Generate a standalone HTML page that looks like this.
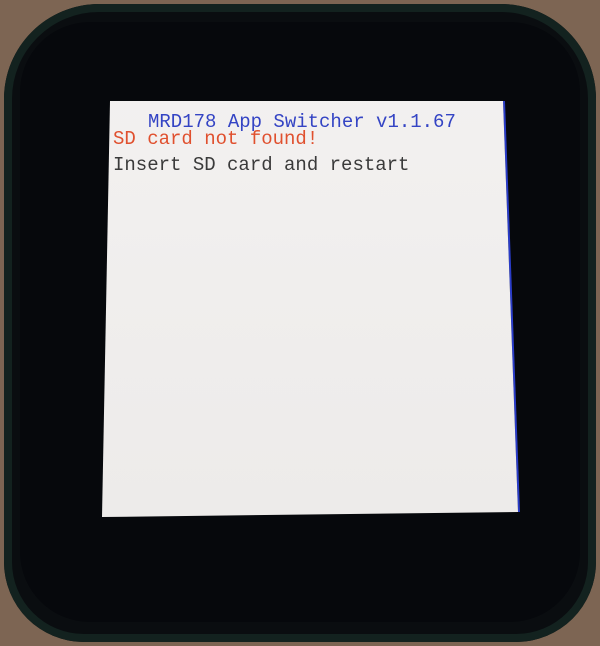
<!DOCTYPE html>
<html><head><style>
html,body{margin:0;padding:0;width:600px;height:646px;overflow:hidden;background:#7d6553;}
.dev{position:absolute;left:4px;top:4px;width:592px;height:638px;border-radius:95px 95px 80px 80px;background:#0a0d10;box-shadow:inset 0 0 0 8px #13221f;}
.bez{position:absolute;left:20px;top:22px;width:560px;height:600px;border-radius:70px;background:#06080c;}
.scr{position:absolute;left:0;top:0;width:600px;height:646px;background:linear-gradient(180deg,#f4f2f1,#ebe9e8);clip-path:polygon(110px 101px,503px 101px,518px 512px,102px 517px);}
.edge{position:absolute;left:0;top:0;width:600px;height:646px;background:#2a3cc8;clip-path:polygon(503px 101px,505px 101px,520px 512px,518px 512px);}
.t{position:absolute;font-family:"Liberation Mono",monospace;font-size:19px;line-height:19px;white-space:pre;}
</style></head><body>
<div class="dev"></div><div class="bez"></div>
<div class="edge"></div>
<div class="scr"></div>
<div class="t" style="left:148px;top:113px;color:#3444c4;">MRD178 App Switcher v1.1.67</div>
<div class="t" style="left:113px;top:130px;color:#e0502e;">SD card not found!</div>
<div class="t" style="left:113px;top:156px;color:#3a3a3a;">Insert SD card and restart</div>
</body></html>
